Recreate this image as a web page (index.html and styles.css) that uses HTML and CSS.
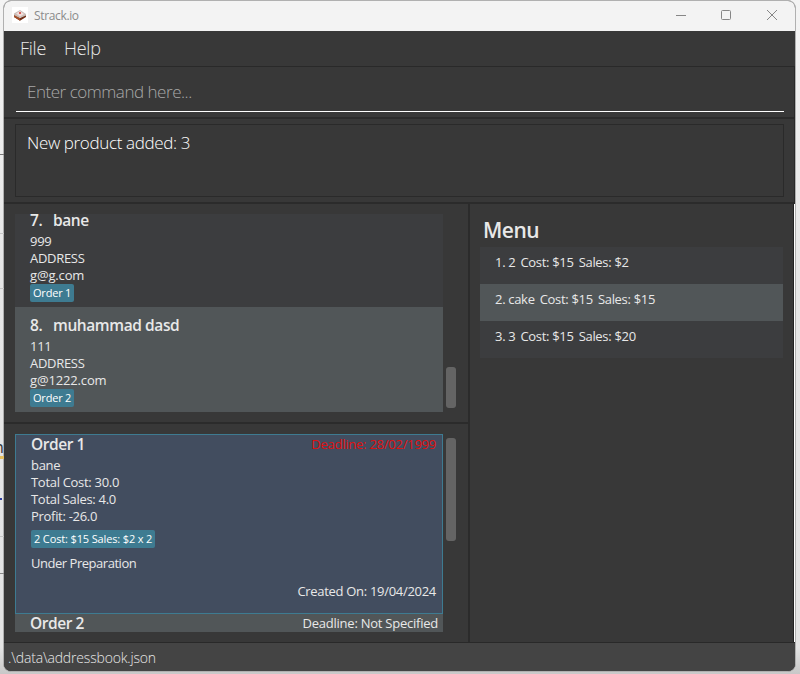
FILE: index.html
```html
<!DOCTYPE html>
<html lang="en">
<head>
<meta charset="utf-8">
<title>Strack.io</title>
<link rel="stylesheet" href="styles.css">
</head>
<body>
<div class="desktop">
  <span class="mark mark-a"></span><span class="mark mark-b"></span><span class="mark mark-c"></span>
  <span class="mark mark-n">n</span><span class="mark mark-y"></span><span class="mark mark-d"></span>
  <span class="mark mark-e"></span><span class="mark mark-f"></span>
</div>
<div class="window">
  <header class="titlebar">
    <svg class="logo" width="16" height="16" viewBox="0 0 16 16">
      <rect width="16" height="16" fill="#fff"/>
      <path d="M2 7.5 8 11l6-3.5V10L8 13.8 2 10Z" fill="#713018"/>
      <path d="M2 7.5 8 11v2.8L2 10Z" fill="#a4512c"/>
      <path d="M2 6.500 8 3l6 4v1.500L8 11 2 8Z" fill="#c9bdb8"/>
      <path d="M4 6.500 8 4l4 3-4 2.500Z" fill="#f2dedb"/>
      <path d="M7 5h2v2H7Z" fill="#d8605a"/>
    </svg>
    <span class="app-name">Strack.io</span>
    <svg class="controls" width="104" height="12" viewBox="0 0 104 12" fill="none" stroke="#868686">
      <path d="M1 6.500h10"/>
      <rect x="46.500" y="1.500" width="9" height="9" rx="1"/>
      <path d="m92 1 10 10M102 1 92 11"/>
    </svg>
  </header>
  <nav class="menubar"><span class="m-file">File</span><span class="m-help">Help</span></nav>
  <div class="command"><div class="field">Enter command here...</div></div>
  <div class="result"><div class="result-box">New product added: 3</div></div>
  <main class="main">
    <div class="left">
      <section class="pane persons">
        <div class="list">
          <article class="person first">
            <h2><span class="num">7.</span>bane</h2>
            <p>999</p><p class="caps">ADDRESS</p><p class="mail">g@g.com</p>
            <span class="tag">Order 1</span>
          </article>
          <article class="person alt">
            <h2><span class="num">8.</span>muhammad dasd</h2>
            <p>111</p><p class="caps">ADDRESS</p><p class="mail">g@1222.com</p>
            <span class="tag">Order 2</span>
          </article>
        </div>
        <div class="track"><div class="thumb thumb-persons"></div></div>
      </section>
      <section class="pane orders">
        <div class="list">
          <article class="order selected">
            <div class="order-head"><h2>Order 1</h2><span class="deadline late">Deadline: 28/02/1999</span></div>
            <p>bane</p><p>Total Cost: 30.0</p><p>Total Sales: 4.0</p><p>Profit: -26.0</p>
            <span class="tag item">2 Cost: $15 Sales: $2 x 2</span>
            <p class="status">Under Preparation</p>
            <p class="created">Created On: 19/04/2024</p>
          </article>
          <article class="order next">
            <div class="order-head"><h2>Order 2</h2><span class="deadline">Deadline: Not Specified</span></div>
          </article>
        </div>
        <div class="track"><div class="thumb thumb-orders"></div></div>
      </section>
    </div>
    <section class="menu">
      <h1>Menu</h1>
      <div class="product"><span>1.</span><span class="name">2</span><span class="price">Cost: $15</span><span class="price">Sales: $2</span></div>
      <div class="product alt"><span>2.</span><span class="name">cake</span><span class="price">Cost: $15</span><span class="price">Sales: $15</span></div>
      <div class="product"><span>3.</span><span class="name">3</span><span class="price">Cost: $15</span><span class="price">Sales: $20</span></div>
    </section>
  </main>
  <footer class="footer">.\data\addressbook.json</footer>
</div>
</body>
</html>
```
FILE: styles.css
```css
* { box-sizing: border-box; }
body {
  margin: 0;
  width: 800px;
  height: 674px;
  overflow: hidden;
  position: relative;
  background: linear-gradient(#f4f4f4, #e6e6e6 40%, #e4e4e4 96%, #c8c8c8);
  font-family: "Open Sans", "Noto Sans", sans-serif;
  color: #e8e8e8;
}
h1, h2, p { margin: 0; }

/* Slivers of the page behind the window */
.desktop { position: absolute; left: 0; top: 0; width: 4px; height: 674px; overflow: hidden; }
.mark { position: absolute; left: 0; width: 4px; height: 1px; background: #c6c6c6; }
.mark-a { top: 154px; background: #777; }
.mark-b { top: 233px; }
.mark-c { top: 288px; }
.mark-n { top: 438px; left: -6px; width: 10px; height: 18px; background: none; color: #333; font-size: 16px; line-height: 18px; }
.mark-y { top: 456px; height: 3px; background: #e6c060; }
.mark-d { top: 498px; width: 2px; height: 2px; background: #3040a0; }
.mark-e { top: 536px; }
.mark-f { top: 573px; background: #888; }

.window {
  width: 793px;
  height: 672px;
  margin-left: 3px;
  border: 1px solid #b0b0b0;
  border-radius: 8px;
  overflow: hidden;
  background: #383838;
  display: flex;
  flex-direction: column;
}

.titlebar {
  height: 30px;
  flex: none;
  background: #f3f3f3;
  display: flex;
  align-items: center;
  padding: 0 16px 0 8px;
}
.logo { margin-top: -2px; }
.app-name { margin-left: 6px; font-size: 12px; line-height: 28px; letter-spacing: -0.35px; color: #8b8b8b; }
.controls { margin-left: auto; margin-top: -2px; }

.menubar {
  height: 36px;
  flex: none;
  border-bottom: 1px solid #292929;
  display: flex;
  font-weight: 300;
  font-size: 18px;
  line-height: 35px;
  letter-spacing: -0.25px;
}
.m-file { margin-left: 16px; width: 44px; }

.command { height: 52px; flex: none; padding: 9px 10px 0 12px; border-bottom: 2px solid #2b2b2b; border-right: 1px solid #292929; }
.field {
  height: 36px;
  border-bottom: 1px solid #fff;
  padding-left: 11px;
  font-weight: 300;
  font-size: 17px;
  line-height: 32px;
  letter-spacing: -0.47px;
  color: #a8a8a8;
}
.result { height: 85px; flex: none; padding: 5px 10px 0 11px; border-bottom: 2px solid #2b2b2b; border-right: 1px solid #292929; }
.result-box {
  height: 73px;
  border: 1px solid #2a2a2a;
  padding: 6px 11px;
  font-weight: 300;
  font-size: 17px;
  line-height: 24px;
  letter-spacing: -0.36px;
  color: #fff;
}

.main { height: 438px; flex: none; display: flex; width: 790px; border-right: 1px solid #222; box-shadow: 1px 0 #fff; }
.left { width: 466px; border-right: 2px solid #2b2b2b; }
.pane { display: flex; padding-left: 11px; }
.persons { height: 220px; padding-top: 10px; border-bottom: 2px solid #2b2b2b; }
.orders { height: 218px; padding-top: 10px; }
.list { width: 428px; height: 198px; overflow: hidden; }
.track { width: 10px; margin-left: 3px; }
.thumb { background: #646464; border-radius: 3px; }
.thumb-persons { height: 41px; margin-top: 153px; }
.thumb-orders { height: 103px; margin-top: 4px; }

h2 { font-weight: 600; font-size: 15.500px; line-height: 21px; letter-spacing: -0.4px; }
p { font-size: 13px; line-height: 17px; letter-spacing: -0.3px; }
.mail { letter-spacing: -0.15px; }
.num { display: inline-block; width: 23px; }

.person { height: 105px; padding: 8px 15px 0; background: #3c3d3f; }
.person h2 { margin-bottom: 2px; }
.first { margin-top: -12px; }
.person.alt, .product.alt { background: #515658; }
.tag {
  display: block;
  width: fit-content;
  height: 18px;
  padding: 0 3px;
  border-radius: 2px;
  background: #3e7b91;
  color: #fff;
  font-size: 11px;
  line-height: 18px;
  letter-spacing: -0.2px;
}

.order-head { display: flex; justify-content: space-between; }
.order-head h2 { line-height: 19px; letter-spacing: -0.45px; }
.deadline { font-size: 13px; line-height: 18px; letter-spacing: -0.24px; }
.late { color: #e01010; }
.selected { height: 180px; border: 1px solid #3e7b91; background: #424d5f; padding: 0 6px 0 15px; }
.selected .order-head { margin-bottom: 3px; }
.item { margin-top: 5px; letter-spacing: -0.14px; }
.status { margin-top: 7px; letter-spacing: -0.47px; }
.created { margin-top: 11px; text-align: right; }
.next { height: 18px; background: #515658; padding: 0 5px 0 15px; }

.menu { flex: 1; padding: 10px 10px 0; }
h1 { height: 33px; padding-left: 3px; font-size: 21px; line-height: 33px; font-weight: 600; letter-spacing: -0.5px; }
.product { height: 37px; padding: 7px 15px 0; background: #3c3d3f; display: flex; font-size: 13px; line-height: 17px; letter-spacing: -0.3px; }
.name { margin-left: 3px; }
.price { margin-left: 5px; }

.footer {
  flex: 1;
  border-top: 1px solid #292929;
  background: #444;
  padding-left: 4px;
  font-weight: 300;
  font-size: 14px;
  line-height: 29px;
  letter-spacing: -0.18px;
}
```
